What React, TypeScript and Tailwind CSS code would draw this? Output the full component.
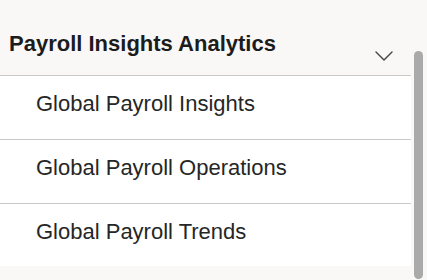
import { ChevronDown } from "lucide-react";

const items = [
  "Global Payroll Insights",
  "Global Payroll Operations",
  "Global Payroll Trends",
];

export default function App() {
  return (
    <div
      className="w-[427px] h-[280px] bg-[#f9f8f6] flex overflow-hidden"
      style={{ fontFamily: '"Liberation Sans", Arial, sans-serif' }}
    >
      <div className="w-[411px] flex flex-col">
        {/* Header */}
        <div className="h-[76px] border-b border-[#c9c9c9] flex pl-[9px] pr-[11px]">
          <div className="flex-1 pt-[31px] text-[22px] leading-[26px] font-bold text-[#1c1c1c]">
            Payroll Insights Analytics
          </div>
          <div className="pt-[40px]">
            <ChevronDown size={32} strokeWidth={1.1} className="text-[#4a4a4a]" />
          </div>
        </div>

        {/* Items */}
        <div className="bg-white">
          {items.map((label, i) => {
            const last = i === items.length - 1;
            return (
              <div
                key={label}
                className={
                  "pt-[15px] pl-[36px] text-[22px] leading-[26px] text-[#262626]" +
                  (last ? " h-[62px]" : " h-[64px] border-b border-[#c9c9c9]")
                }
              >
                {label}
              </div>
            );
          })}
        </div>
      </div>

      {/* Scrollbar */}
      <div className="flex-1 pt-[51px] pl-[3px] pr-[4px]">
        <div className="h-[228px] w-[9px] rounded-full bg-[#aaaaaa]" />
      </div>
    </div>
  );
}
